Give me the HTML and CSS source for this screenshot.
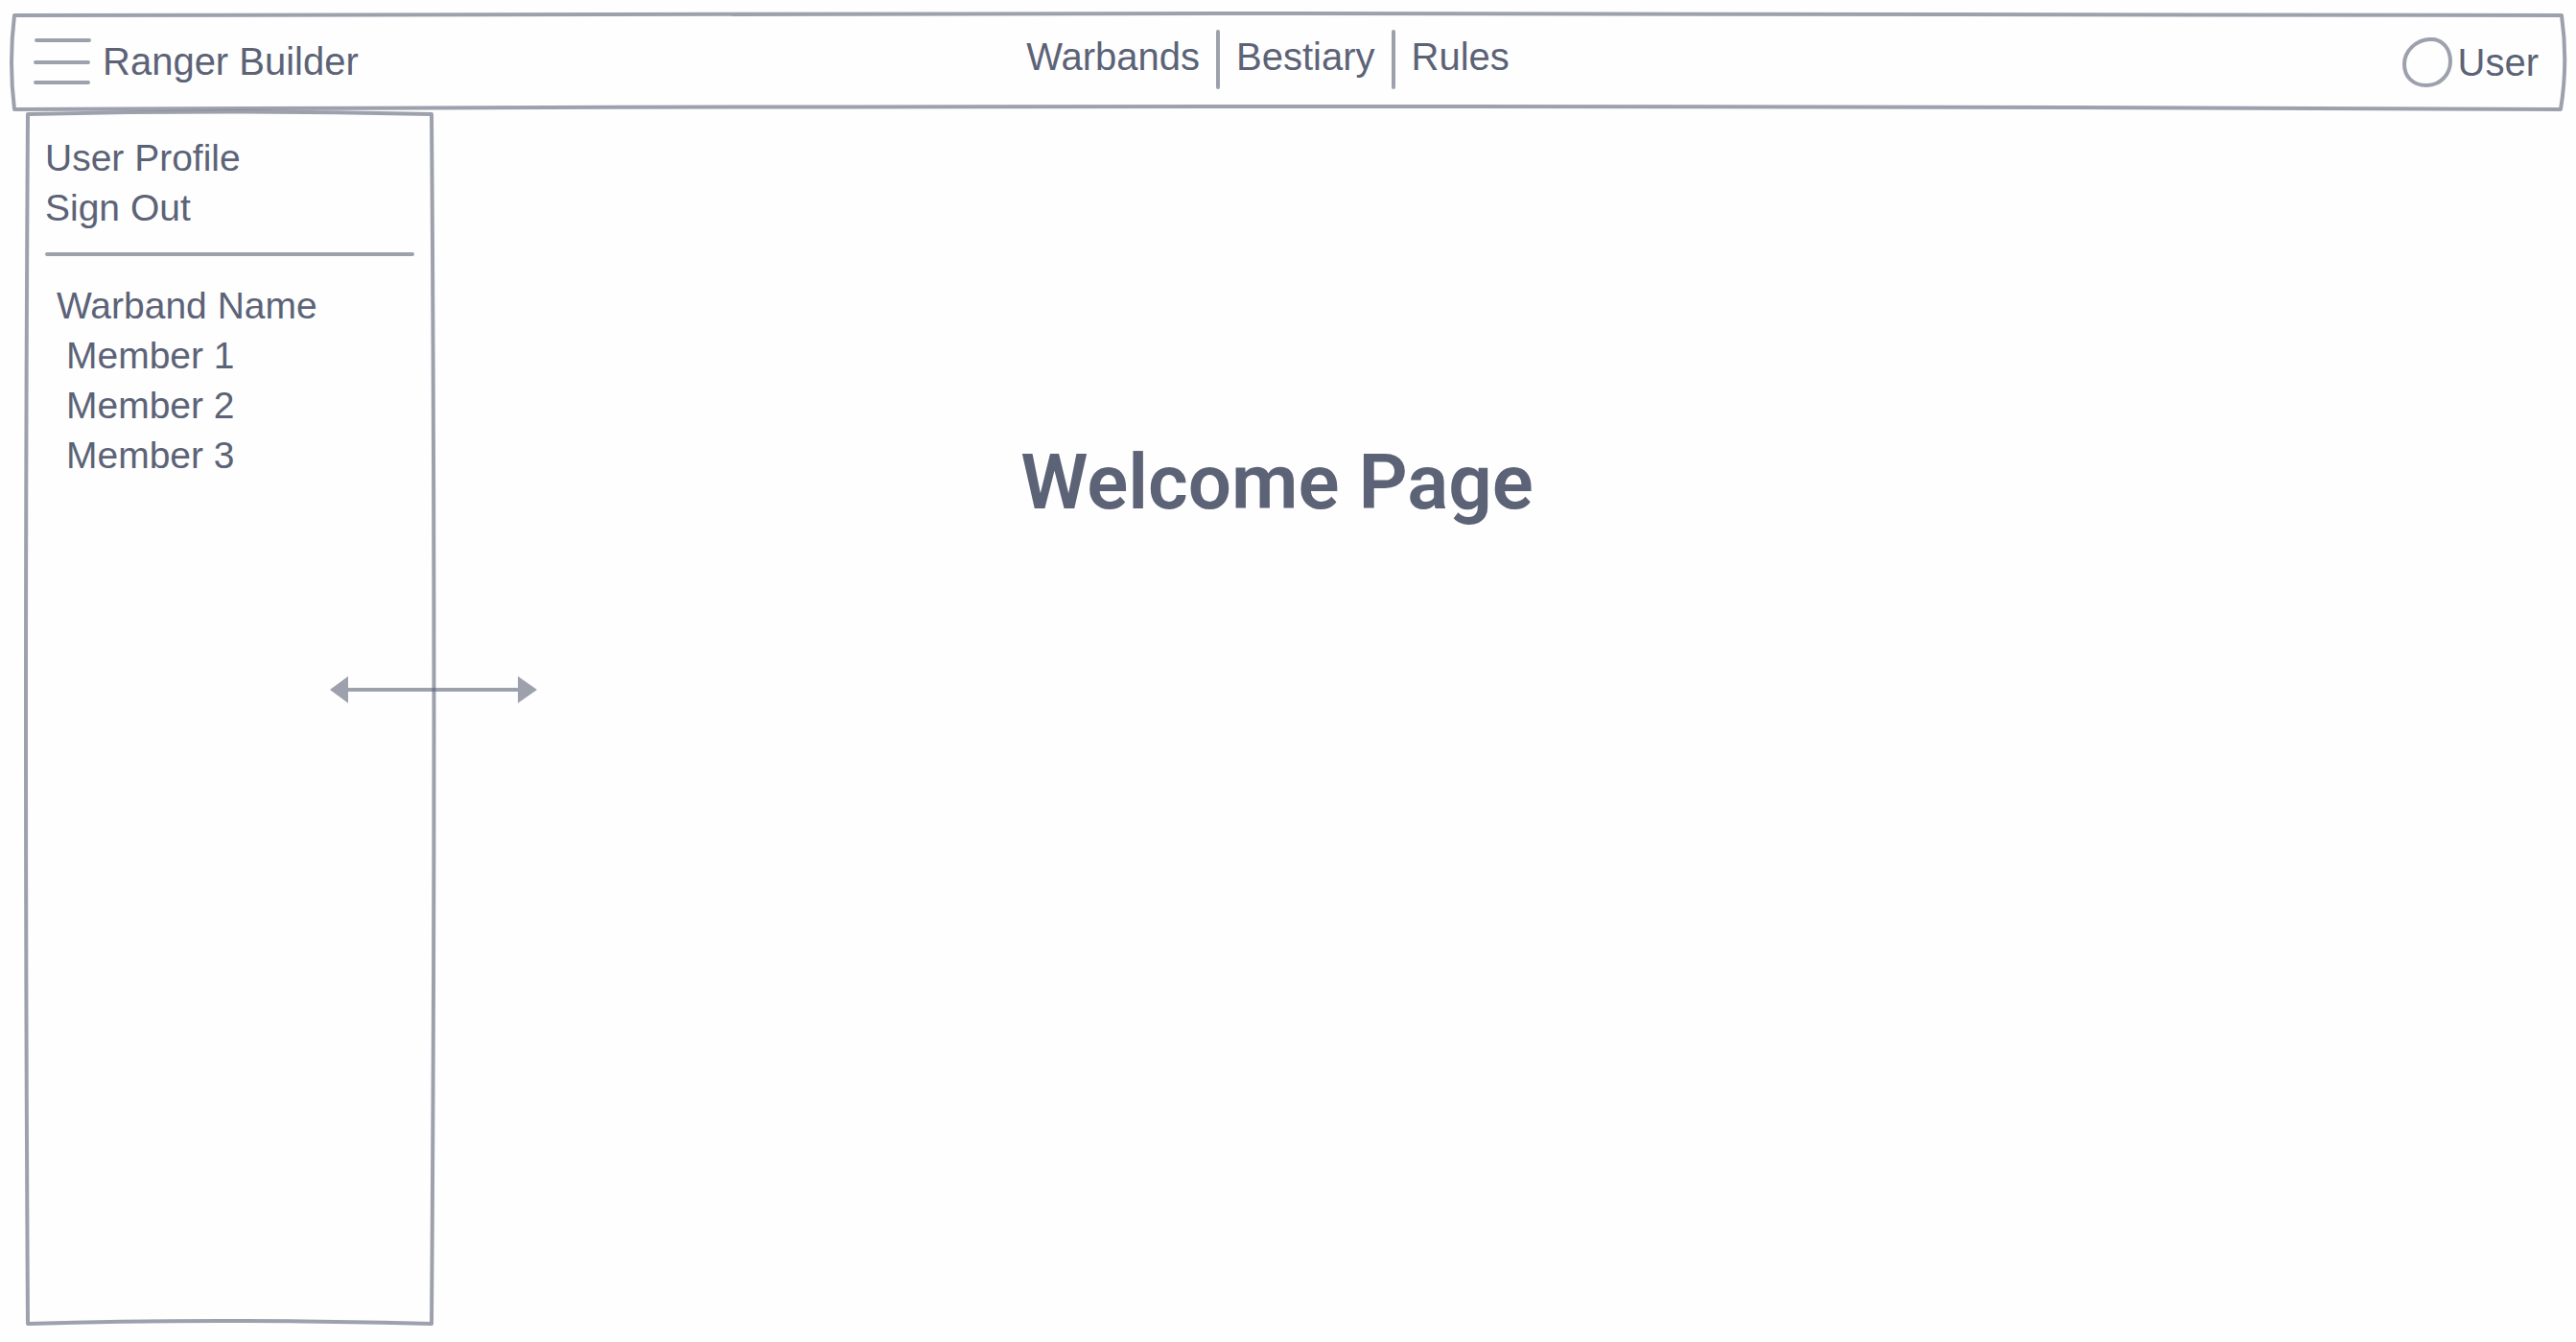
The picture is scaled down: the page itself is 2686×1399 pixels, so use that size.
FILE: index.html
```html
<!DOCTYPE html>
<html lang="en">
<head>
  <meta charset="utf-8">
  <meta name="viewport" content="width=device-width, initial-scale=1">
  <title>Ranger Builder</title>
  <link rel="stylesheet" href="styles.css">
</head>
<body>
  <header class="topbar">
    <svg class="frame" viewBox="0 0 2656 98" preserveAspectRatio="none" aria-hidden="true">
      <path d="M0 0Q1328 -4 2656 0Q2663 49 2655 98Q1328 92 0 98Q-6 49 0 0Z"/>
    </svg>
    <div class="brand">
      <button class="menu-button" type="button" aria-label="Menu">
        <svg class="menu-icon" viewBox="0 0 60 50" aria-hidden="true">
          <path d="M3 3H58M2 26H57M2 47H57"/>
        </svg>
      </button>
      <a class="link" href="#">Ranger Builder</a>
    </div>
    <nav class="main-nav" aria-label="Main">
      <a class="link" href="#">Warbands</a>
      <span class="divider"></span>
      <a class="link" href="#">Bestiary</a>
      <span class="divider"></span>
      <a class="link" href="#">Rules</a>
    </nav>
    <button class="user" type="button">
      <svg class="avatar" viewBox="0 0 52 52" aria-hidden="true">
        <path d="M28 2C42 1 50 12 50 25C50 39 39 50 25 50C11 50 2 41 2 28C2 14 14 3 28 2Z"/>
      </svg>
      User
    </button>
  </header>

  <div class="content">
    <aside class="sidebar">
      <svg class="frame" viewBox="0 0 421 1261" preserveAspectRatio="none" aria-hidden="true">
        <path d="M0 0Q210 -5 421 0Q426 630 421 1261Q190 1255 0 1261Q-4 630 0 0Z"/>
      </svg>
      <ul class="list account">
        <li><a class="link" href="#">User Profile</a></li>
        <li><button class="link" type="button">Sign Out</button></li>
      </ul>
      <hr class="rule">
      <div class="warband">
        <a class="link" href="#">Warband Name</a>
        <ul class="list members">
          <li><a class="link" href="#">Member 1</a></li>
          <li><a class="link" href="#">Member 2</a></li>
          <li><a class="link" href="#">Member 3</a></li>
        </ul>
      </div>
      <svg class="resize-handle" viewBox="0 0 216 28" aria-hidden="true">
        <path class="head" d="M0 14L19 0V28ZM216 14L196 0V28Z"/>
        <path class="shaft" d="M19 14H196"/>
      </svg>
    </aside>
    <main class="page">
      <h1 class="title">Welcome Page</h1>
    </main>
  </div>
</body>
</html>
```

FILE: styles.css
```css
:root {
  --ink: #5c6377;
  --line: rgba(92, 99, 119, 0.6);
}

* {
  box-sizing: border-box;
}

body {
  margin: 0;
  min-height: 100vh;
  display: flex;
  flex-direction: column;
  background: #fefefe;
  color: var(--ink);
  font: 40px/52px "Liberation Sans", Arial, sans-serif;
}

button {
  margin: 0;
  padding: 0;
  border: 0;
  background: none;
  color: inherit;
  font: inherit;
  cursor: pointer;
}

.link {
  color: inherit;
  text-decoration: none;
  white-space: nowrap;
}

/* Hand-drawn outline that stretches with its box */
.frame {
  position: absolute;
  inset: 0;
  width: 100%;
  height: 100%;
  overflow: visible;
  pointer-events: none;
}

.frame path {
  fill: none;
  stroke: var(--line);
  stroke-width: 4px;
  stroke-linejoin: round;
  vector-effect: non-scaling-stroke;
}

.topbar {
  position: relative;
  display: grid;
  grid-template-columns: 1fr auto 1fr;
  align-items: center;
  min-height: 98px;
  margin: 16px 15px 0;
  padding: 0 24px 0 20px;
}

.brand {
  display: flex;
  align-items: center;
  gap: 12px;
  padding-bottom: 3px;
}

.menu-button {
  display: flex;
}

.menu-icon {
  width: 60px;
  height: 50px;
  fill: none;
  stroke: var(--line);
  stroke-width: 4px;
  stroke-linecap: round;
}

.main-nav {
  display: flex;
  align-items: center;
  gap: 17px;
  margin-right: 38px;
  padding-bottom: 6px;
}

.main-nav .link {
  padding-bottom: 6px;
}

.divider {
  width: 4px;
  height: 62px;
  border-radius: 2px;
  background: var(--line);
}

.user {
  display: flex;
  align-items: center;
  justify-self: end;
  gap: 6px;
}

.avatar {
  width: 52px;
  height: 52px;
  fill: none;
  stroke: var(--line);
  stroke-width: 4px;
}

/* The drawer lies over the left part of the page */
.content {
  flex: 1;
  display: grid;
  grid-template-columns: 421px 1fr;
  padding: 5px 0 19px 29px;
}

.sidebar {
  position: relative;
  z-index: 1;
  grid-area: 1 / 1;
  padding: 20px 18px;
  font-size: 39px;
}

.list {
  margin: 0;
  padding: 0;
  list-style: none;
}

.list li {
  display: flex;
}

.rule {
  height: 4px;
  margin: 20px 0;
  border: 0;
  border-radius: 2px;
  background: var(--line);
}

.warband {
  padding: 6px 12px;
}

.members {
  padding-left: 10px;
}

.resize-handle {
  position: absolute;
  top: 586px;
  right: -110px;
  width: 216px;
  height: 28px;
}

.resize-handle .head {
  fill: var(--line);
}

.resize-handle .shaft {
  fill: none;
  stroke: var(--line);
  stroke-width: 4px;
}

.page {
  grid-area: 1 / 1 / 2 / 3;
  padding: 336px 52px 0 0;
}

.title {
  margin: 0;
  font: 600 80px/96px Roboto, sans-serif;
  text-align: center;
}
```
